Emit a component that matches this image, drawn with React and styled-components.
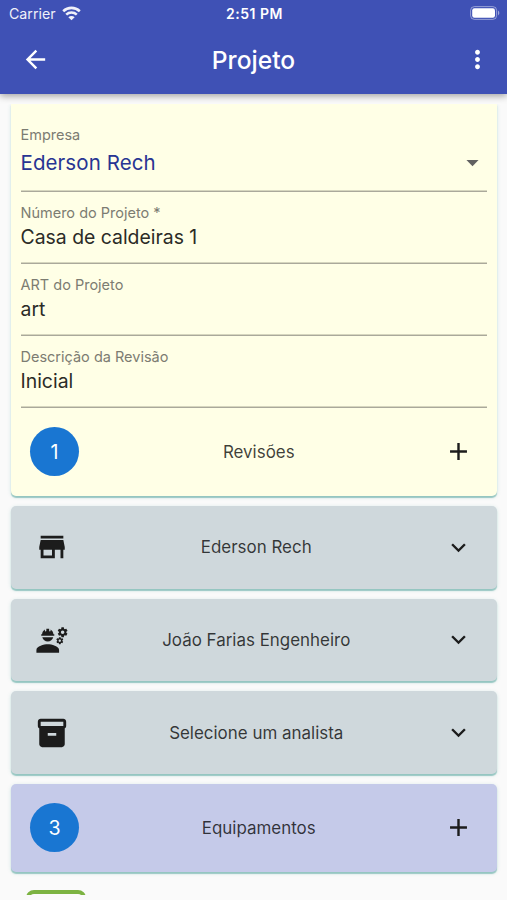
import React from 'react'
import styled, { createGlobalStyle } from 'styled-components'
import {
  MdAdd,
  MdArrowBack,
  MdArrowDropDown,
  MdEngineering,
  MdExpandMore,
  MdInventory2,
  MdMoreVert,
  MdStore
} from 'react-icons/md'

const colors = {
  indigo: '#3f51b5',
  indigoLight: '#c5cae9',
  navy: '#283593',
  blue: '#1976d2',
  cream: '#ffffe6',
  grey: '#cfd8dc',
  green: '#7cb342',
  background: '#fafafa'
}

const App = () =>
  <Screen>
    <Header>
      <StatusBar>
        <Carrier>
          Carrier
          <WifiIcon />
        </Carrier>
        <Clock>2:51 PM</Clock>
        <BatteryIcon />
      </StatusBar>
      <Toolbar>
        <MdArrowBack size={29} />
        <Title>Projeto</Title>
        <MdMoreVert size={29} />
      </Toolbar>
    </Header>
    <Content>
      <FormCard>
        <Fields>
          <SelectField>
            <Label>Empresa</Label>
            <SelectRow>
              <SelectValue>Ederson Rech</SelectValue>
              <MdArrowDropDown size={29} />
            </SelectRow>
          </SelectField>
          <Field>
            <Label>Número do Projeto *</Label>
            <Value>Casa de caldeiras 1</Value>
          </Field>
          <Field>
            <Label>ART do Projeto</Label>
            <Value>art</Value>
          </Field>
          <Field>
            <Label>Descrição da Revisão</Label>
            <Value>Inicial</Value>
          </Field>
        </Fields>
        <Row $height={87}>
          <Badge>1</Badge>
          <RowTitle>Revisões</RowTitle>
          <MdAdd size={29} />
        </Row>
      </FormCard>
      <Card>
        <Row>
          <Leading><MdStore size={34} /></Leading>
          <RowTitle>Ederson Rech</RowTitle>
          <MdExpandMore size={29} />
        </Row>
      </Card>
      <Card>
        <Row>
          <Leading><MdEngineering size={34} /></Leading>
          <RowTitle>João Farias Engenheiro</RowTitle>
          <MdExpandMore size={29} />
        </Row>
      </Card>
      <Card>
        <Row>
          <Leading><MdInventory2 size={34} /></Leading>
          <RowTitle>Selecione um analista</RowTitle>
          <MdExpandMore size={29} />
        </Row>
      </Card>
      <Card $color={colors.indigoLight}>
        <Row $height={88}>
          <Badge>3</Badge>
          <RowTitle>Equipamentos</RowTitle>
          <MdAdd size={29} />
        </Row>
      </Card>
      <Equipment />
    </Content>
    <GlobalStyle />
  </Screen>

export default App

const WifiIcon = () =>
  <svg width="19" height="15" viewBox="0 0 19 15" fill="none" stroke="#fff" strokeWidth="2.6">
    <path d="M1.2 5.2C5.9 0.8 13.1 0.8 17.8 5.2" />
    <path d="M4.2 8.6c3-2.8 7.6-2.8 10.6 0" />
    <path d="M9.5 14.2 6.3 11.2c1.8-1.6 4.6-1.6 6.4 0z" fill="#fff" stroke="none" />
  </svg>

const BatteryIcon = () =>
  <svg width="30" height="14" viewBox="0 0 30 14">
    <rect x="0.6" y="0.6" width="26" height="12.8" rx="3.8" fill="none" stroke="#fff" strokeOpacity="0.45" />
    <rect x="2.2" y="2.2" width="22.8" height="9.6" rx="2.2" fill="#fff" />
    <path d="M28 4.6c1.8.8 1.8 4 0 4.8z" fill="#fff" fillOpacity="0.5" />
  </svg>

const GlobalStyle = createGlobalStyle`
  body {
    margin: 0;
    background: ${colors.background};
    font-family: Inter, Roboto, sans-serif;
  }

  svg {
    flex-shrink: 0;
  }
`

const Screen = styled.div`
  display: flex;
  flex-direction: column;
  width: 507px;
  height: 900px;
  overflow: hidden;
  box-sizing: border-box;
  padding-bottom: 5px;
  background: ${colors.background};
`

const Header = styled.header`
  flex-shrink: 0;
  height: 94px;
  color: #fff;
  background: ${colors.indigo};
  box-shadow: 0 2px 7px rgba(0, 0, 0, 0.36);
`

const StatusBar = styled.div`
  display: grid;
  grid-template-columns: 1fr auto 1fr;
  align-items: center;
  height: 26px;
  padding: 0 7px 0 9px;
  box-sizing: border-box;

  > :last-child {
    justify-self: end;
  }
`

const Carrier = styled.div`
  display: flex;
  align-items: center;
  gap: 6px;
  font-size: 14.2px;
  opacity: 0.92;
`

const Clock = styled.div`
  padding-top: 1px;
  font-size: 14px;
  font-weight: 600;
  letter-spacing: 0.5px;
`

const Toolbar = styled.div`
  display: flex;
  align-items: center;
  justify-content: space-between;
  height: 67px;
  padding: 0 15px 0 20.5px;
`

const Title = styled.h1`
  margin: 0;
  padding-right: 5.5px;
  font-size: 24.6px;
  font-weight: 500;
`

const Content = styled.main`
  flex: 1;
  min-height: 0;
  margin-top: 10px;
  padding: 0 10px 0 10.5px;
  overflow: hidden;
`

const Card = styled.section`
  margin-bottom: 10px;
  border-radius: 5px;
  color: #1c1c1c;
  background: ${props => props.$color || colors.grey};
  box-shadow: 0 2px 1px rgba(0, 121, 107, 0.34), 0 1px 4px rgba(0, 137, 123, 0.16);
`

const FormCard = styled(Card)`
  padding-bottom: 0.9px;
  border-radius: 0 0 5px 5px;
  background: ${colors.cream};
`

const Fields = styled.div`
  padding: 16px 10px 0;
`

const Field = styled.div`
  height: 72px;
  box-sizing: border-box;
  padding-top: 11px;
  border-bottom: 1px solid #aaa99b;
  box-shadow: 0 -1px 0 rgba(120, 120, 100, 0.3) inset;
`

const SelectField = styled(Field)`
  padding-top: 5px;
`

const Label = styled.div`
  font-size: 14.5px;
  line-height: 20px;
  color: #7c7c72;
`

const Value = styled.div`
  font-size: 19.4px;
  line-height: 28px;
  color: #2b2b27;
`

const SelectValue = styled(Value)`
  font-size: 20.5px;
  letter-spacing: 0.08px;
  color: ${colors.navy};
`

const SelectRow = styled.div`
  display: flex;
  align-items: center;
  justify-content: space-between;
  margin-top: 3px;
  color: #616161;
`

const Row = styled.div`
  display: flex;
  align-items: center;
  height: ${props => props.$height || 82.7}px;
  padding: 0 24.5px 0 19.5px;
`

const Badge = styled.div`
  display: flex;
  flex-shrink: 0;
  align-items: center;
  justify-content: center;
  width: 49px;
  height: 49px;
  border-radius: 50%;
  font-size: 19.6px;
  color: #fff;
  background: ${colors.blue};
`

const Leading = styled.div`
  display: flex;
  flex-shrink: 0;
  justify-content: center;
  width: 44px;
`

const RowTitle = styled.div`
  flex: 1;
  padding-right: 5px;
  text-align: center;
  font-size: 16.95px;
  color: rgba(0, 0, 0, 0.76);
`

const Equipment = styled.div`
  width: 60px;
  height: 60px;
  margin: 18px 0 0 15.5px;
  box-sizing: border-box;
  border: 4px solid ${colors.green};
  border-radius: 8px;
`
